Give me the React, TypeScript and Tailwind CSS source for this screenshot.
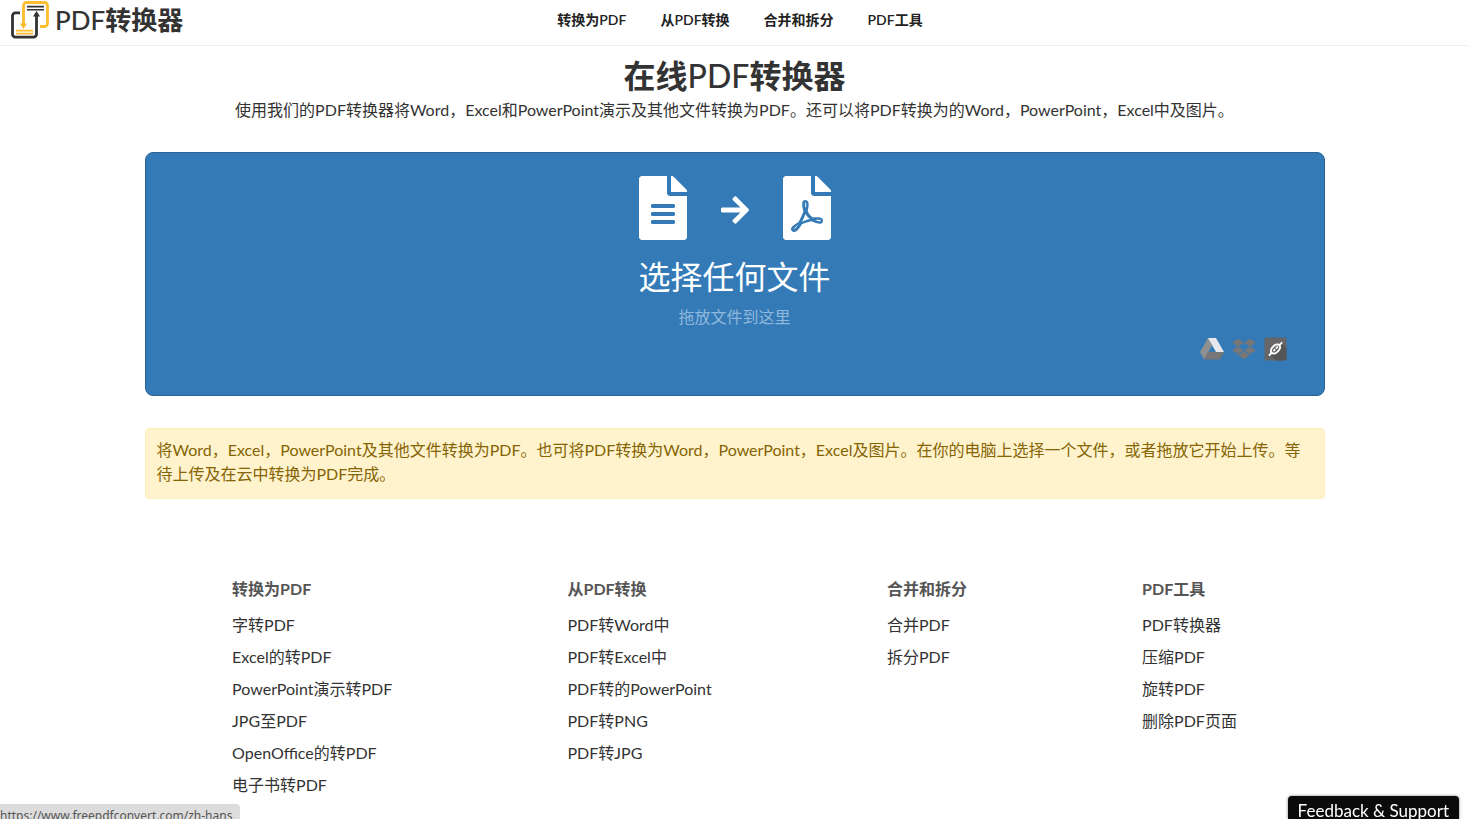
import { FaArrowRight, FaDropbox, FaFileAlt, FaFilePdf } from 'react-icons/fa';

const navItems = ['转换为PDF', '从PDF转换', '合并和拆分', 'PDF工具'];

const footerColumns = [
  {
    title: '转换为PDF',
    links: ['字转PDF', 'Excel的转PDF', 'PowerPoint演示转PDF', 'JPG至PDF', 'OpenOffice的转PDF', '电子书转PDF'],
  },
  {
    title: '从PDF转换',
    links: ['PDF转Word中', 'PDF转Excel中', 'PDF转的PowerPoint', 'PDF转PNG', 'PDF转JPG'],
  },
  { title: '合并和拆分', links: ['合并PDF', '拆分PDF'] },
  { title: 'PDF工具', links: ['PDF转换器', '压缩PDF', '旋转PDF', '删除PDF页面'] },
];

function Logo() {
  return (
    <svg viewBox="0 0 38 38" className="h-[38px] w-[38px] shrink-0" fill="none" aria-hidden="true">
      <path d="M9 11.8H4.5a3 3 0 0 0-3 3v18.4a3 3 0 0 0 3 3h18a3 3 0 0 0 3-3V15" stroke="#333" strokeWidth="2.8" />
      <path d="M22 15.5 25.5 10l3.5 5.5z" fill="#333" />
      <path d="M29 25.5h4.5a3 3 0 0 0 3-3V4.5a3 3 0 0 0-3-3h-18a3 3 0 0 0-3 3V23" stroke="#fdbd2c" strokeWidth="2.8" />
      <path d="M9 22.5 12.5 28l3.5-5.5z" fill="#fdbd2c" />
      <path d="M16 5.6h17M16 8.8h17" stroke="#333" strokeWidth="1.6" />
      <path d="M5 29.700h17M5 32.700h17" stroke="#fdbd2c" strokeWidth="1.8" />
    </svg>
  );
}

function DriveIcon() {
  return (
    <svg viewBox="0 0 24 22" className="h-[22px] w-6" aria-hidden="true">
      <path d="M8 0 0 14l4 7.5 8-14z" fill="#8f8f8f" />
      <path d="M8 0h8l8 14h-8z" fill="#e8e8ec" />
      <path d="M8 14h16l-4 7.5H4z" fill="#777" />
    </svg>
  );
}

function LinkIcon() {
  return (
    <svg viewBox="0 0 24 24" className="h-6 w-6" fill="none" aria-hidden="true">
      <rect x="0.5" y="0.5" width="22" height="23" rx="2" fill="#666" />
      <path d="M17.500 6.500 22.500 11.500v10a2 2 0 0 1-2 2H11.500l-5-6z" fill="#555" />
      <g stroke="#fff" strokeLinecap="round">
        <ellipse cx="11.5" cy="12" rx="5.4" ry="3.4" transform="rotate(-45 11.5 12)" strokeWidth="2" />
        <path d="m5.500 18 2-2M15.500 8l2.200-2.200M10 13.500l.8-.8M12.500 11l.8-.8" strokeWidth="1.8" />
      </g>
    </svg>
  );
}

export default function App() {
  return (
    <div className="min-h-screen bg-white font-['Lato','Noto_Sans_CJK_SC',sans-serif] text-base text-[#333]">
      <header className="grid h-[46px] grid-cols-[1fr_auto_1fr] items-center border-b border-[#f0f0f0] pb-1.5 pl-[11px]">
        <a href="#" className="flex items-center gap-1.5 text-[26px] leading-9 font-bold">
          <Logo />
          <span>
            <span className="font-medium">PDF</span>转换器
          </span>
        </a>
        <nav className="flex gap-[34px] text-sm leading-5 font-semibold text-[#222]">
          {navItems.map((item) => (
            <a key={item} href="#">
              {item}
            </a>
          ))}
        </nav>
      </header>

      <main className="mx-auto max-w-[1180px]">
        <div className="pt-3 text-center">
          <h1 className="text-[32px] leading-9 font-bold">
            在线<span className="font-medium">PDF</span>转换器
          </h1>
          <p className="mt-1 leading-6">
            使用我们的PDF转换器将Word，Excel和PowerPoint演示及其他文件转换为PDF。还可以将PDF转换为的Word，PowerPoint，Excel中及图片。
          </p>
        </div>

        <section className="mt-[30px] flex flex-col rounded-lg border border-[#2a6496] bg-[#337ab7] px-9 pt-[23px] pb-[34px]">
          <button type="button" className="flex w-full flex-col items-center text-white">
            <span className="flex items-center gap-[34px]">
              <FaFileAlt className="h-16 w-12" />
              <FaArrowRight className="mt-1 h-8 w-7" />
              <FaFilePdf className="h-16 w-12" />
            </span>
            <span className="mt-[13px] text-[32px] leading-[48px]">选择任何文件</span>
            <span className="mt-1 leading-6 text-[#8fb8dc]">拖放文件到这里</span>
          </button>
          <div className="mt-2 flex items-center justify-end gap-2">
            <button type="button" aria-label="Google Drive">
              <DriveIcon />
            </button>
            <button type="button" aria-label="Dropbox">
              <FaDropbox className="h-6 w-6 text-[#777]" />
            </button>
            <button type="button" aria-label="URL">
              <LinkIcon />
            </button>
          </div>
        </section>

        <p className="mt-8 rounded border border-[#ffeeba] bg-[#fff3cd] px-[11px] pt-[9px] pb-3 leading-6 text-[#856404]">
          将Word，Excel，PowerPoint及其他文件转换为PDF。也可将PDF转换为Word，PowerPoint，Excel及图片。在你的电脑上选择一个文件，或者拖放它开始上传。等待上传及在云中转换为PDF完成。
        </p>

        <footer className="mt-[78px] flex justify-around pb-5">
          {footerColumns.map((column) => (
            <div key={column.title}>
              <h2 className="leading-6 font-bold text-[#555]">{column.title}</h2>
              <ul className="mt-3 space-y-2 leading-6">
                {column.links.map((link) => (
                  <li key={link}>
                    <a href="#">{link}</a>
                  </li>
                ))}
              </ul>
            </div>
          ))}
        </footer>
      </main>

      <div className="fixed bottom-0 left-0 h-[15px] overflow-hidden rounded-tr bg-[#dcdcdc] pt-0.5 pr-2 font-['Noto_Sans',sans-serif] text-xs leading-5 text-[#555]">
        https://www.freepdfconvert.com/zh-hans
      </div>
      <button
        type="button"
        className="fixed right-2.5 bottom-0 flex h-[23px] items-start overflow-hidden rounded-t bg-[#0b0b0b] px-2.5 pt-[3px] text-[17px] leading-6 text-white shadow-[0_0_3px_#777]"
      >
        Feedback &amp; Support
      </button>
    </div>
  );
}
